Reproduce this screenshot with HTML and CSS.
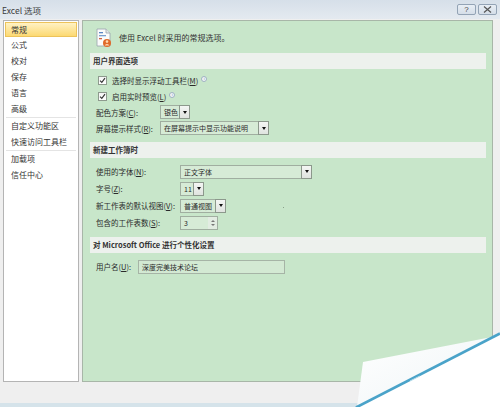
FILE: index.html
```html
<!DOCTYPE html>
<html>
<head>
<meta charset="utf-8">
<link rel="stylesheet" href="styles.css">
</head>
<body>
<div class="titlebar">
  <span class="title">Excel 选项</span>
  <div class="tbtns">
    <span class="tbtn">?</span>
    <span class="tbtn"><svg width="9" height="7" viewBox="0 0 9 7"><path d="M1 0.5 L8 6.5 M8 0.5 L1 6.5" stroke="#555" stroke-width="1.2"/></svg></span>
  </div>
</div>
<div class="window">
  <div class="nav">
    <div class="nitem sel">常规</div>
    <div class="nitem">公式</div>
    <div class="nitem">校对</div>
    <div class="nitem">保存</div>
    <div class="nitem">语言</div>
    <div class="nitem">高级</div>
    <div class="nsep"></div>
    <div class="nitem">自定义功能区</div>
    <div class="nitem">快速访问工具栏</div>
    <div class="nsep"></div>
    <div class="nitem">加载项</div>
    <div class="nitem">信任中心</div>
  </div>
  <div class="main">
    <div class="head">
      <svg class="hicon" width="19" height="20" viewBox="0 0 19 20">
        <path d="M2 1 H11 L15 5 V18 H2 Z" fill="#fbfbfb" stroke="#9aa3ad" stroke-width="0.8"/>
        <path d="M11 1 V5 H15" fill="#e4e8ec" stroke="#9aa3ad" stroke-width="0.8"/>
        <rect x="4" y="4" width="4" height="1.3" fill="#5a86c4"/>
        <rect x="4" y="7" width="7" height="1.3" fill="#7aa0d0"/>
        <rect x="4" y="10" width="3" height="1.3" fill="#d06040"/>
        <circle cx="12" cy="15" r="4" fill="#e06a2a"/>
        <circle cx="12" cy="13.6" r="1.3" fill="#ffd7b0"/>
        <path d="M9.6 17.5 Q12 14.6 14.4 17.5" fill="#ffd7b0"/>
      </svg>
      <span class="htext">使用 Excel 时采用的常规选项。</span>
    </div>

    <div class="band">用户界面选项</div>
    <div class="sec s1">
      <div class="row"><span class="chk"><svg width="7" height="7" viewBox="0 0 7 7"><path d="M1 3.6 L2.8 5.4 L6 1.2" fill="none" stroke="#333" stroke-width="1.1"/></svg></span><span>选择时显示浮动工具栏(<u>M</u>)</span><span class="info">i</span></div>
      <div class="row"><span class="chk"><svg width="7" height="7" viewBox="0 0 7 7"><path d="M1 3.6 L2.8 5.4 L6 1.2" fill="none" stroke="#333" stroke-width="1.1"/></svg></span><span>启用实时预览(<u>L</u>)</span><span class="info">i</span></div>
      <div class="row"><span class="lbl l1">配色方案(<u>C</u>):</span><span class="dd w-silver"><span class="ddt">银色</span><span class="ddb"><i class="tri"></i></span></span></div>
      <div class="row"><span class="lbl l1">屏幕提示样式(<u>R</u>):</span><span class="dd w-tip"><span class="ddt">在屏幕提示中显示功能说明</span><span class="ddb"><i class="tri"></i></span></span></div>
    </div>

    <div class="band">新建工作簿时</div>
    <div class="sec s2">
      <div class="row r2"><span class="lbl l2">使用的字体(<u>N</u>):</span><span class="dd w-font"><span class="ddt">正文字体</span><span class="ddb"><i class="tri"></i></span></span></div>
      <div class="row r2"><span class="lbl l2">字号(<u>Z</u>):</span><span class="dd w-size"><span class="ddt">11</span><span class="ddb"><i class="tri"></i></span></span></div>
      <div class="row r2"><span class="lbl l2">新工作表的默认视图(<u>V</u>):</span><span class="dd w-view"><span class="ddt">普通视图</span><span class="ddb"><i class="tri"></i></span></span><span class="dot"></span></div>
      <div class="row r2"><span class="lbl l2">包含的工作表数(<u>S</u>):</span><span class="spin"><span class="ddt">3</span><span class="spb"><i class="up"></i><i class="dn"></i></span></span></div>
    </div>

    <div class="band">对 Microsoft Office 进行个性化设置</div>
    <div class="sec s3">
      <div class="row r2"><span class="lbl l3">用户名(<u>U</u>):</span><span class="inp">深度完美技术论坛</span></div>
    </div>
  </div>
</div>
<div class="footer"></div>
<div class="bottomline"></div>
<svg class="curl" width="160" height="82" viewBox="340 325 160 82">
  <defs>
    <linearGradient id="flap" x1="0" y1="0" x2="1" y2="1">
      <stop offset="0" stop-color="#ffffff"/>
      <stop offset="1" stop-color="#eef4f6"/>
    </linearGradient>
  </defs>
  <polygon points="363,362 497,336 357,407" fill="url(#flap)"/>
  <polygon points="357,407 500,333 500,407" fill="#ffffff"/>
  <line x1="356" y1="407.5" x2="500" y2="333.5" stroke="#4aa3c9" stroke-width="2.6"/>
  <line x1="410" y1="381" x2="420" y2="376" stroke="#bfe2ee" stroke-width="1"/>
</svg>
</body>
</html>
```
FILE: styles.css
```css
* { box-sizing: border-box; }
html, body { margin: 0; padding: 0; }
body {
  width: 500px;
  height: 407px;
  overflow: hidden;
  position: relative;
  background: #efefef;
  font-family: "Noto Sans CJK SC", "Liberation Sans", sans-serif;
  font-size: 7.5px;
  color: #2a2a2a;
}
u { text-decoration: underline; }

.titlebar {
  height: 19px;
  display: flex;
  align-items: center;
  justify-content: space-between;
  padding: 0 3px 0 2px;
  background: linear-gradient(#d6dfe9, #e4eaf0);
}
.title { font-size: 8.5px; color: #3c3c3c; }
.tbtns { display: flex; gap: 2px; align-self: flex-start; margin-top: 4px; }
.tbtn {
  width: 19px;
  height: 11px;
  border: 1px solid #93a3b5;
  border-radius: 2px;
  background: linear-gradient(#e8eef5, #d5dee8);
  display: flex;
  align-items: center;
  justify-content: center;
  font-size: 8px;
  line-height: 1;
  color: #444;
  font-family: "Liberation Sans", sans-serif;
}

.window {
  display: flex;
  gap: 3px;
  padding: 1px 7px 0 3px;
  height: 363px;
}
.nav {
  width: 76px;
  background: #ffffff;
  border: 1px solid #b4b4b4;
  padding: 0 1px;
  font-size: 8px;
}
.nitem {
  height: 16px;
  line-height: 16px;
  padding-left: 6px;
  color: #333;
  white-space: nowrap;
}
.nitem.sel {
  margin-top: 1px;
  height: 15px;
  line-height: 14px;
  background: linear-gradient(#fff2c4, #fcd972);
  border: 1px solid #edc35a;
  padding-left: 5px;
}
.nsep { height: 1px; background: #e4e4e4; margin: 0 1px; }

.main {
  flex: 1;
  background: #c8e6ca;
  border: 1px solid #a8b6a8;
  padding: 0 6px 0 7px;
}
.head {
  height: 32px;
  display: flex;
  align-items: center;
  padding-left: 5px;
  gap: 5px;
}
.hicon { margin-top: 2px; }
.htext { font-size: 8px; color: #333; }

.band {
  height: 16px;
  line-height: 16px;
  background: #edf1ed;
  padding-left: 3px;
  font-weight: bold;
  color: #333;
}
.sec { padding-left: 6px; }
.s1 { padding-top: 3px; padding-bottom: 6px; }
.s2 { padding-top: 5px; padding-bottom: 6px; }
.s3 { padding-top: 5px; }

.row {
  height: 16px;
  display: flex;
  align-items: center;
  white-space: nowrap;
}
.r2 { height: 17px; }

.chk {
  width: 9px;
  height: 9px;
  margin-left: 2px;
  margin-right: 5px;
  border: 1px solid #8e9a8e;
  background: linear-gradient(#f4f4f4, #ffffff);
  display: flex;
  align-items: center;
  justify-content: center;
}
.info {
  width: 6px;
  height: 6px;
  margin-left: 3px;
  margin-top: -3px;
  border: 1px solid #9fb0c0;
  border-radius: 50%;
  background: #f2f6fa;
  font-size: 4px;
  line-height: 4px;
  text-align: center;
  color: #7088a0;
  font-family: "Liberation Sans", sans-serif;
}

.lbl { flex: none; white-space: nowrap; }
.l1 { width: 64px; }
.l2 { width: 84px; }
.l3 { width: 42px; }

.dd, .spin {
  height: 14px;
  display: flex;
  border: 1px solid #a0aea0;
  background: #d6ebd6;
  flex: none;
}
.ddt {
  flex: 1;
  padding-left: 3px;
  line-height: 12px;
  white-space: nowrap;
  overflow: hidden;
  font-size: 7px;
}
.ddb {
  width: 11px;
  flex: none;
  margin: -1px -1px -1px 0;
  border: 1px solid #8c988c;
  background: linear-gradient(#f4f6f4, #dfe3df);
  display: flex;
  align-items: center;
  justify-content: center;
}
.tri {
  width: 0;
  height: 0;
  border-left: 2.5px solid transparent;
  border-right: 2.5px solid transparent;
  border-top: 3px solid #111;
}
.w-silver { width: 30px; }
.w-tip { width: 109px; }
.w-font { width: 132px; }
.w-size { width: 24px; }
.w-view { width: 46px; }
.spin { width: 38px; }
.spb {
  width: 9px;
  display: flex;
  flex-direction: column;
  align-items: center;
  justify-content: center;
  gap: 2px;
  background: #e2ece2;
}
.up, .dn { width: 0; height: 0; border-left: 2px solid transparent; border-right: 2px solid transparent; }
.up { border-bottom: 2px solid #777; }
.dn { border-top: 2px solid #777; }
.dot { width: 1px; height: 1px; background: #8aa08a; margin-left: 57px; margin-top: 4px; }

.inp {
  width: 147px;
  height: 14px;
  border: 1px solid #a6b4a6;
  background: #d3e9d3;
  padding-left: 3px;
  line-height: 12px;
  font-size: 7px;
}

.footer { height: 21px; }
.bottomline { height: 4px; background: #d5e3ea; }

.curl { position: absolute; left: 340px; top: 325px; }
```
